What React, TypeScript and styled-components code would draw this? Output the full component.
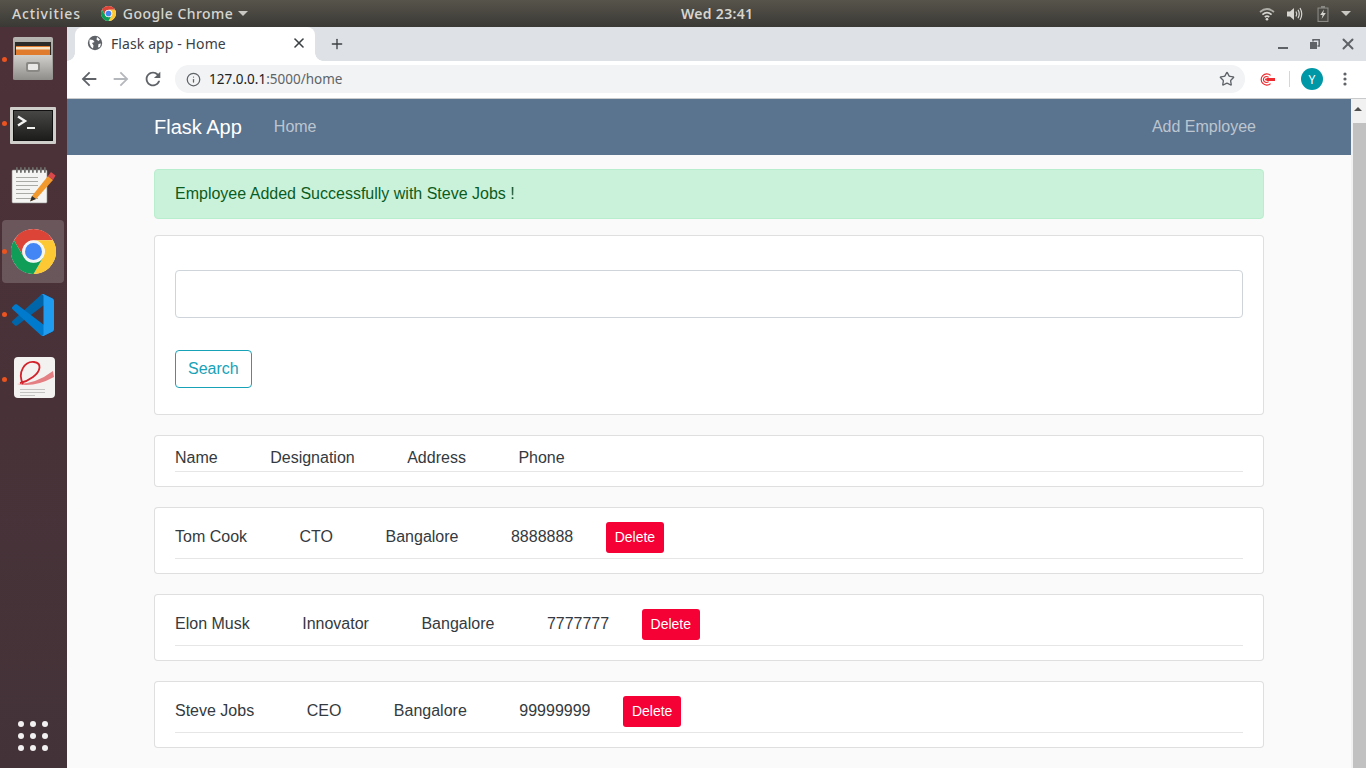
import styled, { createGlobalStyle } from 'styled-components';
import { Info, Star, X, Plus } from 'lucide-react';

const Global = createGlobalStyle`
  html, body { margin: 0; padding: 0; height: 100%; overflow: hidden; }
  * { box-sizing: border-box; }
  body { font-family: "Liberation Sans", Arial, sans-serif; }
`;

const Screen = styled.div`
  width: 1366px;
  height: 768px;
  display: flex;
  flex-direction: column;
  overflow: hidden;
`;

/* gnome top bar */
const TopBar = styled.header`
  height: 27px;
  flex: none;
  display: grid;
  grid-template-columns: 669px auto 1fr;
  align-items: center;
  padding: 0 15px 0 12px;
  background: linear-gradient(#57544b, #3a3935);
  color: #d6d5d0;
  font-family: "Noto Sans", sans-serif;
  font-size: 14px;
  font-weight: 500;
  letter-spacing: 0.45px;
`;

const TopLeft = styled.div`
  display: flex;
  align-items: center;
`;

const Activities = styled.span`
  letter-spacing: 0.85px;
`;

const Clock = styled.span`
  font-weight: 600;
  letter-spacing: 0.3px;
`;

const AppMenu = styled.div`
  display: flex;
  align-items: center;
  gap: 5px;
  margin-left: 20px;
  svg {
    margin-right: 2px;
  }
`;

const Caret = styled.span`
  width: 0;
  height: 0;
  border-left: 5px solid transparent;
  border-right: 5px solid transparent;
  border-top: 5px solid #c9c8c3;
`;

const Tray = styled.div`
  display: flex;
  align-items: center;
  justify-content: flex-end;
  gap: 12px;
`;

const Desktop = styled.div`
  flex: 1;
  display: flex;
  min-height: 0;
`;

/* launcher */
const Dock = styled.nav`
  width: 67px;
  flex: none;
  display: flex;
  flex-direction: column;
  padding: 4px 0 17px;
  background: linear-gradient(#4d3138, #433338);
`;

const DockItem = styled.div<{ $active?: boolean; $dot?: number }>`
  position: relative;
  width: 62px;
  height: 63px;
  margin-left: 2px;
  display: flex;
  align-items: center;
  justify-content: center;
  border-radius: 4px;
  background: ${({ $active }) => ($active ? 'rgba(255,255,255,0.18)' : 'transparent')};
  &::before {
    content: '';
    display: ${({ $dot }) => ($dot === undefined ? 'none' : 'block')};
    position: absolute;
    left: 0;
    top: ${({ $dot }) => $dot ?? 29}px;
    width: 5px;
    height: 5px;
    border-radius: 50%;
    background: #e95420;
  }
`;

const AppGrid = styled.div`
  margin: auto 0 0 18px;
  display: grid;
  grid-template-columns: repeat(3, 6px);
  gap: 6px;
  i {
    width: 6px;
    height: 6px;
    border-radius: 50%;
    background: #f2f0f0;
  }
`;

/* browser window */
const Browser = styled.div`
  flex: 1;
  min-width: 0;
  display: flex;
  flex-direction: column;
`;

const TabStrip = styled.div`
  height: 34px;
  flex: none;
  display: flex;
  align-items: flex-end;
  padding-left: 8px;
  background: #dee1e6;
`;

const Tab = styled.div`
  position: relative;
  width: 240px;
  height: 34px;
  display: flex;
  align-items: center;
  padding: 0 8px 2px 12px;
  background: #fff;
  border-radius: 8px 8px 0 0;
  color: #3c4043;
  font-family: "Noto Sans", sans-serif;
  font-size: 14px;
  letter-spacing: 0.1px;
  &::before,
  &::after {
    content: '';
    position: absolute;
    bottom: 0;
    width: 8px;
    height: 8px;
  }
  &::before {
    left: -8px;
    background: radial-gradient(circle at 0 0, #dee1e6 7.5px, #fff 8px);
  }
  &::after {
    right: -8px;
    background: radial-gradient(circle at 100% 0, #dee1e6 7.5px, #fff 8px);
  }
`;

const TabTitle = styled.span`
  flex: 1;
  margin-left: 8px;
`;

const NewTab = styled.div`
  margin: 0 0 9px 14px;
  display: flex;
  color: #3c4043;
`;

const WindowButtons = styled.div`
  align-self: center;
  margin: 0 9.5px 0 auto;
  display: flex;
  align-items: center;
  gap: 22px;
  color: #5f6368;
  svg:last-child {
    margin-left: -3.5px;
  }
`;

const Toolbar = styled.div`
  height: 38px;
  flex: none;
  display: flex;
  align-items: center;
  padding: 0 0 1px 11px;
  background: #fff;
  border-bottom: 1px solid #c8cacc;
`;

const NavIcons = styled.div`
  display: flex;
  align-items: center;
  gap: 10px;
  width: 97px;
  flex: none;
`;

const Omnibox = styled.div`
  width: 1070px;
  height: 28px;
  flex: none;
  display: flex;
  align-items: center;
  padding: 0 10px 0 11px;
  border-radius: 14px;
  background: #f1f3f4;
  font-family: "Noto Sans", sans-serif;
  font-size: 13.5px;
  color: #5f6368;
`;

const Url = styled.div`
  flex: 1;
  margin-left: 8px;
  padding-bottom: 1px;
  b {
    font-weight: 400;
    color: #202124;
  }
`;

const ToolbarEnd = styled.div`
  flex: 1;
  display: flex;
  align-items: center;
  padding-left: 15px;
`;

const Divider = styled.span`
  width: 1px;
  height: 16px;
  margin: 0 11px 0 14px;
  background: #d4d6d9;
`;

const Avatar = styled.span`
  width: 22px;
  height: 22px;
  border-radius: 50%;
  display: flex;
  align-items: center;
  justify-content: center;
  margin-right: 19.5px;
  background: #0097a7;
  color: #fff;
  font-family: "Noto Sans", sans-serif;
  font-size: 12px;
`;

const Viewport = styled.div`
  flex: 1;
  min-height: 0;
  display: flex;
`;

const Page = styled.main`
  flex: 1;
  min-width: 0;
  background: #fafafa;
  color: #343a40;
  font-size: 16px;
  line-height: 24px;
`;

const Scrollbar = styled.div`
  width: 15px;
  flex: none;
  display: flex;
  flex-direction: column;
  background: #f1f1f1;
`;

const ScrollArrow = styled.div`
  height: 24px;
  padding: 8px 0 0 3px;
  &::before {
    content: '';
    display: block;
    width: 0;
    height: 0;
    border-left: 4px solid transparent;
    border-right: 4px solid transparent;
    border-bottom: 4px solid #505050;
  }
`;

const ScrollThumb = styled.div`
  flex: 1;
  margin-left: 2px;
  background: #c1c1c1;
`;

const Navbar = styled.div`
  height: 56px;
  background: #5a738e;
`;

const Container = styled.div`
  width: 1110px;
  margin: 0 auto;
`;

const NavInner = styled(Container)`
  height: 100%;
  display: flex;
  align-items: center;
  padding-right: 8px;
`;

const Brand = styled.span`
  font-size: 20px;
  color: #fff;
  margin-right: 32px;
`;

const NavLink = styled.span<{ $end?: boolean }>`
  color: rgba(255, 255, 255, 0.6);
  margin-left: ${({ $end }) => ($end ? 'auto' : '0')};
`;

const Content = styled(Container)`
  padding-top: 14px;
  display: flex;
  flex-direction: column;
`;

const Alert = styled.div`
  height: 50px;
  margin-bottom: 16px;
  padding: 12px 20px;
  border: 1px solid #b8eecd;
  border-radius: 4px;
  background: #caf2da;
  color: #0c5c1e;
`;

const Card = styled.section<{ $pad?: string }>`
  margin-bottom: 20px;
  padding: ${({ $pad }) => $pad ?? '14px 20px 14px'};
  border: 1px solid rgba(0, 0, 0, 0.125);
  border-radius: 4px;
  background: #fff;
`;

const SearchInput = styled.input`
  display: block;
  width: 100%;
  height: 48px;
  margin-bottom: 32px;
  border: 1px solid #ced4da;
  border-radius: 4px;
  background: #fff;
`;

const SearchButton = styled.button`
  display: block;
  height: 38px;
  padding: 0 12px;
  border: 1px solid #17a2b8;
  border-radius: 4px;
  background: transparent;
  color: #17a2b8;
  font: inherit;
`;

const Row = styled.div<{ $header?: boolean }>`
  display: flex;
  align-items: center;
  height: ${({ $header }) => ($header ? '26px' : '37px')};
  padding-bottom: ${({ $header }) => ($header ? '2px' : '6px')};
  border-bottom: 1px solid #e6e6e6;
  gap: 52.5px;
`;

const DeleteButton = styled.button`
  height: 31px;
  margin-left: -20.1px;
  padding: 0 9px;
  border: none;
  border-radius: 3px;
  background: #f50136;
  color: #fff;
  font-family: inherit;
  font-size: 14px;
`;

const employees = [
  { name: 'Tom Cook', role: 'CTO', phone: '8888888' },
  { name: 'Elon Musk', role: 'Innovator', phone: '7777777' },
  { name: 'Steve Jobs', role: 'CEO', phone: '99999999' },
];

function ChromeLogo({ size }: { size: number }) {
  const wedge = 'M24 0A24 24 0 0 0 3.2 12L13.6 30A12 12 0 0 1 24 12H44.8A24 24 0 0 0 24 0Z';
  return (
    <svg width={size} height={size} viewBox="0 0 48 48">
      <circle cx="24" cy="24" r="24" fill="#fff" />
      <path d={wedge} fill="#db4437" />
      <path d={wedge} fill="#fcc934" transform="rotate(120 24 24)" />
      <path d={wedge} fill="#0f9d58" transform="rotate(240 24 24)" />
      <circle cx="24" cy="24" r="11.5" fill="#f1f3f4" />
      <circle cx="24" cy="24" r="9" fill="#4285f4" />
    </svg>
  );
}

function CabinetIcon() {
  return (
    <svg width="44" height="46" viewBox="0 0 44 46" style={{ marginTop: -8 }}>
      <defs>
        <linearGradient id="cab" x1="0" y1="0" x2="0" y2="1">
          <stop offset="0" stopColor="#b8b6b2" />
          <stop offset="1" stopColor="#7f7d79" />
        </linearGradient>
        <linearGradient id="cabFront" x1="0" y1="0" x2="0" y2="1">
          <stop offset="0" stopColor="#d2d0cc" />
          <stop offset="1" stopColor="#8f8d89" />
        </linearGradient>
      </defs>
      <path d="M2 3Q2 1 4 1H40Q42 1 42 3V43H2Z" fill="url(#cab)" />
      <rect x="4" y="6" width="36" height="14" fill="#2c2a29" />
      <rect x="5" y="10" width="34" height="10" fill="#e07b2e" />
      <rect x="5" y="11" width="34" height="2.5" fill="#f6e3c6" />
      <path d="M3 19H41L42 43Q42 44 40 44H4Q2 44 2 43Z" fill="url(#cabFront)" />
      <rect x="15" y="26" width="14" height="10" rx="2" fill="#8b8986" />
      <rect x="17" y="28" width="10" height="6" rx="1" fill="#e9e8e6" />
    </svg>
  );
}

function TerminalIcon() {
  return (
    <svg width="46" height="37" viewBox="0 0 46 37">
      <defs>
        <linearGradient id="termScreen" x1="0" y1="0" x2="0" y2="1">
          <stop offset="0" stopColor="#474745" />
          <stop offset="1" stopColor="#1c1c1b" />
        </linearGradient>
      </defs>
      <rect x="0" y="0" width="46" height="37" rx="1" fill="#cfcecb" />
      <rect x="3" y="3" width="40" height="31" fill="#111" />
      <rect x="4" y="4" width="38" height="29" fill="url(#termScreen)" />
      <path d="M8 9.5L15 14L8 18.5" fill="none" stroke="#f2f2f2" strokeWidth="2.4" />
      <rect x="17" y="20" width="8" height="2" fill="#f2f2f2" />
    </svg>
  );
}

function NotepadIcon() {
  return (
    <svg width="46" height="37" viewBox="0 0 46 37" style={{ marginTop: -6, marginLeft: 2 }}>
      <rect x="1" y="3" width="35" height="33" rx="1" fill="#f4f4f2" stroke="#8f8e8c" strokeWidth="0.6" />
      {[5, 9, 13, 17, 21, 25, 29, 33].map((x) => (
        <rect key={x} x={x} y="0" width="1.8" height="6" rx="0.9" fill="#6d6d6b" />
      ))}
      {[10, 14, 18, 22, 26, 31].map((y) => (
        <rect key={y} x="5" y={y} width={y === 22 ? 14 : 22} height="1" fill="#a9a9a6" />
      ))}
      <path d="M21 29L37 9L42 13L25 32L19.5 34Z" fill="#f2992e" />
      <path d="M19 34.5L21 29L25 32Z" fill="#2e2e2e" />
      <path d="M37 9L40 5L44.5 8.5L42 13Z" fill="#d9484a" />
    </svg>
  );
}

function VSCodeIcon() {
  return (
    <svg width="42" height="42" viewBox="0 0 100 100">
      <path d="M96.4614 10.7962L75.8569 0.875542C73.4719 -0.272773 70.6217 0.211611 68.75 2.08333L1.29858 63.5832C-0.515693 65.2373 -0.513607 68.0937 1.30308 69.7452L6.81272 74.754C8.29793 76.1042 10.5347 76.2036 12.1338 74.9905L93.3609 13.3699C96.086 11.3026 100 13.2462 100 16.6667V16.4275C100 14.0265 98.6246 11.8378 96.4614 10.7962Z" fill="#0065a9" />
      <path d="M96.4614 89.2038L75.8569 99.1245C73.4719 100.273 70.6217 99.7884 68.75 97.9167L1.29858 36.4168C-0.515693 34.7627 -0.513607 31.9063 1.30308 30.2548L6.81272 25.246C8.29793 23.8958 10.5347 23.7964 12.1338 25.0095L93.3609 86.6301C96.086 88.6974 100 86.7538 100 83.3333V83.5725C100 85.9735 98.6246 88.1622 96.4614 89.2038Z" fill="#007acc" />
      <path d="M75.8578 99.1263C73.4721 100.274 70.6219 99.7885 68.75 97.9166C71.0564 100.223 75 98.5895 75 95.3278V4.67213C75 1.41039 71.0564 -0.223106 68.75 2.08329C70.6219 0.211402 73.4721 -0.273666 75.8578 0.873633L96.4587 10.7807C98.6234 11.8217 100 14.0112 100 16.4132V83.5871C100 85.9891 98.6234 88.1786 96.4586 89.2196L75.8578 99.1263Z" fill="#1f9cf0" />
    </svg>
  );
}

function PdfIcon() {
  return (
    <svg width="41" height="41" viewBox="0 0 41 41" style={{ marginLeft: 2 }}>
      <rect x="0" y="0" width="41" height="41" rx="4" fill="#f4f2f0" />
      <path d="M3 27Q22 27 39 14L40 20Q20 31 3 27Z" fill="#e47f83" />
      <path d="M9 27C3 15 11 4 20 5C28 6 27 14 19 20C15 23 11 25 6 26" fill="none" stroke="#d4222b" strokeWidth="1.8" />
      <rect x="6" y="32" width="25" height="1" fill="#c4c2c0" />
      <rect x="6" y="35" width="25" height="1" fill="#c4c2c0" />
      <rect x="6" y="38" width="15" height="1" fill="#c4c2c0" />
    </svg>
  );
}

function WifiIcon() {
  return (
    <svg width="16" height="14" viewBox="0 0 16 14" fill="none" stroke="#d6d5d0" strokeWidth="1.7">
      <path d="M1 5Q8 -1 15 5" opacity="0.7" />
      <path d="M3.4 7.6Q8 3.6 12.6 7.6" />
      <path d="M5.8 10Q8 8.2 10.2 10" />
      <circle cx="8" cy="12.2" r="1.3" fill="#d6d5d0" stroke="none" />
    </svg>
  );
}

function VolumeIcon() {
  return (
    <svg width="16" height="14" viewBox="0 0 16 14" fill="none" stroke="#d6d5d0" strokeWidth="1.2">
      <path d="M0 4.5H3L7 1V13L3 9.5H0Z" fill="#d6d5d0" stroke="none" />
      <path d="M9 4.5Q10.5 7 9 9.5" />
      <path d="M11 2.8Q13.5 7 11 11.2" />
      <path d="M13 1Q16.5 7 13 13" />
    </svg>
  );
}

function BatteryIcon() {
  return (
    <svg width="12" height="16" viewBox="0 0 12 16" style={{ marginLeft: 2 }}>
      <path d="M4 0H8V1.5H11.5V16H0.5V1.5H4Z" fill="#8a8983" />
      <rect x="1.6" y="2.6" width="8.8" height="12.3" fill="#4a4843" />
      <path d="M7 3.5L3.2 9H5.6L4.6 13L8.8 7H6.2Z" fill="#d6d5d0" />
    </svg>
  );
}

function GlobeIcon() {
  return (
    <svg width="16" height="16" viewBox="0 0 16 16">
      <circle cx="8" cy="8" r="7.2" fill="#5f6368" />
      <path d="M2.5 4.5L6 5L7.5 7L5 8L6.5 10.5L6 13.5L4 12L2.5 8.5ZM10 2L13 4.5L11.5 6L9.5 4.5ZM11.5 9L14 8.5L13 12L11 12.5Z" fill="#fff" />
    </svg>
  );
}

function MinimizeIcon() {
  return (
    <svg width="10" height="10" viewBox="0 0 10 10">
      <rect x="0" y="8" width="10" height="2" fill="#5f6368" />
    </svg>
  );
}

function RestoreIcon() {
  return (
    <svg width="10" height="10" viewBox="0 0 10 10" fill="none" stroke="#5f6368" strokeWidth="1.5">
      <path d="M3 2.5V0.8H9.2V7H7.5" />
      <rect x="0" y="3" width="7" height="7" fill="#5f6368" stroke="none" />
    </svg>
  );
}

function GrammarlyIcon() {
  return (
    <svg width="15" height="13" viewBox="0 0 15 13" fill="none" stroke="#ef2b2f" strokeWidth="1.2">
      <path d="M10.6 2.4A5.6 5.6 0 1 0 10.6 10.6" />
      <path d="M8.6 4.4A3 3 0 1 0 8.6 8.6" />
      <circle cx="6" cy="6.5" r="1" fill="#ef2b2f" stroke="none" />
      <rect x="6.5" y="5" width="8.5" height="3" fill="#ef2b2f" stroke="none" />
    </svg>
  );
}

function KebabIcon() {
  return (
    <svg width="4" height="14" viewBox="0 0 4 14" fill="#5f6368">
      <circle cx="2" cy="2" r="1.6" />
      <circle cx="2" cy="7" r="1.6" />
      <circle cx="2" cy="12" r="1.6" />
    </svg>
  );
}

function MaterialIcon({ d, color }: { d: string; color: string }) {
  return (
    <svg width="22" height="22" viewBox="0 0 24 24" fill={color}>
      <path d={d} />
    </svg>
  );
}

const backPath = 'M20 11H7.83l5.59-5.59L12 4l-8 8 8 8 1.41-1.41L7.83 13H20v-2z';
const forwardPath = 'M12 4l-1.41 1.41L16.17 11H4v2h12.17l-5.58 5.59L12 20l8-8z';
const reloadPath =
  'M17.65 6.35C16.2 4.9 14.21 4 12 4c-4.42 0-7.99 3.58-7.99 8s3.57 8 7.99 8c3.73 0 6.84-2.55 7.73-6h-2.08c-.82 2.33-3.04 4-5.65 4-3.31 0-6-2.69-6-6s2.69-6 6-6c1.66 0 3.14.69 4.22 1.78L13 11h7V4l-2.35 2.35z';

export default function App() {
  return (
    <Screen>
      <Global />
      <TopBar>
        <TopLeft>
          <Activities>Activities</Activities>
          <AppMenu>
            <ChromeLogo size={15} />
            <span>Google Chrome</span>
            <Caret />
          </AppMenu>
        </TopLeft>
        <Clock>Wed 23:41</Clock>
        <Tray>
          <WifiIcon />
          <VolumeIcon />
          <BatteryIcon />
          <Caret />
        </Tray>
      </TopBar>

      <Desktop>
        <Dock>
          <DockItem $dot={26}><CabinetIcon /></DockItem>
          <DockItem $dot={27}><TerminalIcon /></DockItem>
          <DockItem><NotepadIcon /></DockItem>
          <DockItem $active $dot={29}><ChromeLogo size={45} /></DockItem>
          <DockItem $dot={29}><VSCodeIcon /></DockItem>
          <DockItem $dot={31}><PdfIcon /></DockItem>
          <AppGrid>
            {Array.from({ length: 9 }, (_, i) => <i key={i} />)}
          </AppGrid>
        </Dock>

        <Browser>
          <TabStrip>
            <Tab>
              <GlobeIcon />
              <TabTitle>Flask app - Home</TabTitle>
              <X size={16} color="#3c4043" strokeWidth={2.4} />
            </Tab>
            <NewTab><Plus size={16} strokeWidth={2} /></NewTab>
            <WindowButtons>
              <MinimizeIcon />
              <RestoreIcon />
              <X size={18} strokeWidth={2.6} />
            </WindowButtons>
          </TabStrip>

          <Toolbar>
            <NavIcons>
              <MaterialIcon d={backPath} color="#5f6368" />
              <MaterialIcon d={forwardPath} color="#b4b7bb" />
              <MaterialIcon d={reloadPath} color="#5f6368" />
            </NavIcons>
            <Omnibox>
              <Info size={15} />
              <Url><b>127.0.0.1</b>:5000/home</Url>
              <Star size={16} color="#5f6368" strokeWidth={2} />
            </Omnibox>
            <ToolbarEnd>
              <GrammarlyIcon />
              <Divider />
              <Avatar>Y</Avatar>
              <KebabIcon />
            </ToolbarEnd>
          </Toolbar>

          <Viewport>
            <Page>
              <Navbar>
                <NavInner>
                  <Brand>Flask App</Brand>
                  <NavLink>Home</NavLink>
                  <NavLink $end>Add Employee</NavLink>
                </NavInner>
              </Navbar>
              <Content>
                <Alert>Employee Added Successfully with Steve Jobs !</Alert>
                <Card $pad="34px 20px 26px">
                  <SearchInput />
                  <SearchButton>Search</SearchButton>
                </Card>
                <Card $pad="10px 20px 14px">
                  <Row $header>
                    <span>Name</span>
                    <span>Designation</span>
                    <span>Address</span>
                    <span>Phone</span>
                  </Row>
                </Card>
                {employees.map((e) => (
                  <Card key={e.name}>
                    <Row>
                      <span>{e.name}</span>
                      <span>{e.role}</span>
                      <span>Bangalore</span>
                      <span>{e.phone}</span>
                      <DeleteButton>Delete</DeleteButton>
                    </Row>
                  </Card>
                ))}
              </Content>
            </Page>
            <Scrollbar>
              <ScrollArrow />
              <ScrollThumb />
            </Scrollbar>
          </Viewport>
        </Browser>
      </Desktop>
    </Screen>
  );
}
